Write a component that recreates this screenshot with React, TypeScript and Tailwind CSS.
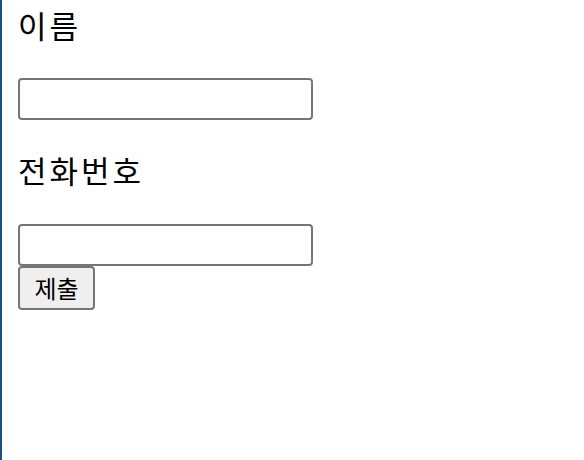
export default function App() {
  return (
    <div className="min-h-[460px] w-[584px] border-l-2 border-[#1d4f7f] bg-white pl-4 text-black" style={{ fontFamily: '"Noto Sans CJK KR", "Noto Sans", sans-serif' }}>
      <form className="flex flex-col items-start" onSubmit={(e) => e.preventDefault()}>
        <label className="block h-[50px] text-[31px] leading-[50px] font-normal tracking-[3px]">이름</label>
        <input type="text" className="mt-[28px] h-[42px] w-[295px] rounded-[4px] border-2 border-[#767676] bg-white px-1 outline-none" />
        <label className="mt-[25px] block h-[50px] text-[31px] leading-[50px] font-normal tracking-[3px]">전화번호</label>
        <input type="tel" className="mt-[29px] h-[42px] w-[295px] rounded-[4px] border-2 border-[#767676] bg-white px-1 outline-none" />
        <button type="submit" className="h-[44px] w-[77px] rounded-[4px] border-2 border-[#767676] bg-[#efefef] text-[24px] leading-none">제출</button>
      </form>
    </div>
  );
}
